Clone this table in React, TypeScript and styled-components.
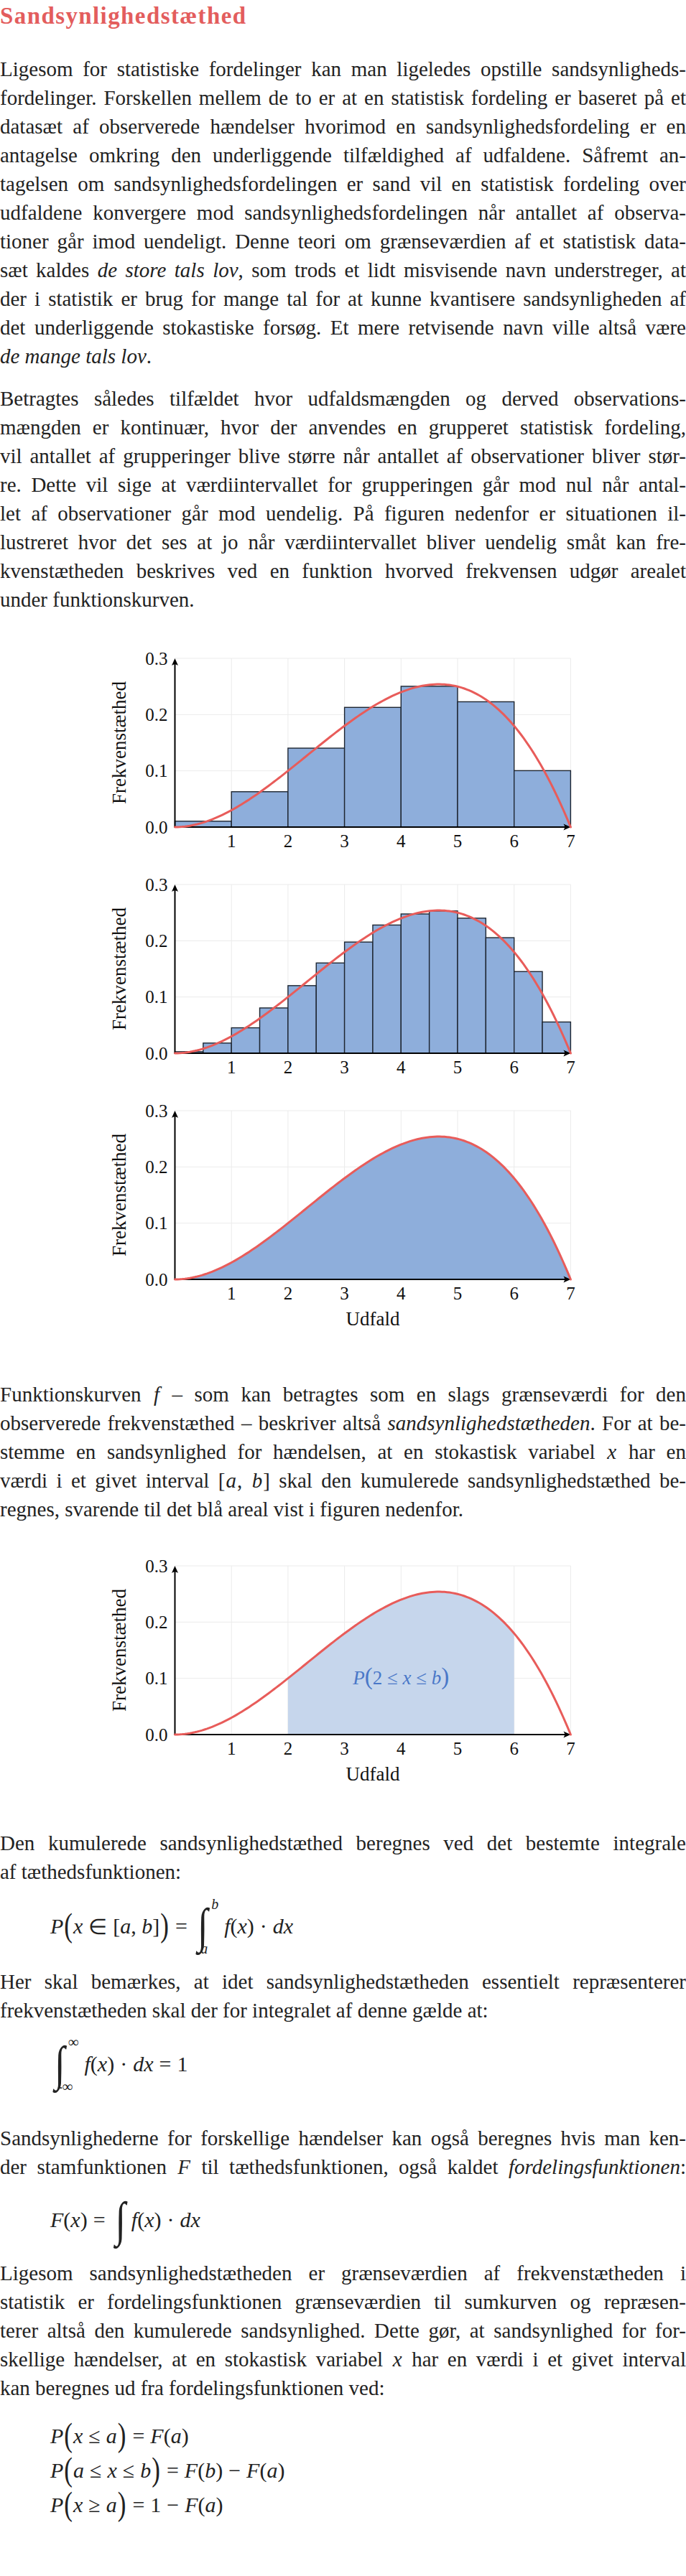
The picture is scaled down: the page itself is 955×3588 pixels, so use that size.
import React from "react";
import styled, { createGlobalStyle } from "styled-components";

const COLOR = {
  TEXT: "#222222",
  HEADING: "#e35d5d",
  CURVE: "#e85c5a",
  BAR: "#8eaedb",
  BAR_EDGE: "#1e2631",
  SHADE: "#c6d6ec",
  LABEL: "#4a78c8",
  GRID: "#ebebeb",
  AXIS: "#000000",
};

const SERIF = `"Liberation Serif", "Times New Roman", serif`;

const GlobalStyle = createGlobalStyle`
  html, body {
    margin: 0;
    padding: 0;
    background: #ffffff;
  }
  body {
    font-family: ${SERIF};
    color: ${COLOR.TEXT};
  }
`;

// ---------- chart geometry ----------
const UX = 78.7;
const UY = 783.3;
const OX = 105.5;
const OY = 255;
const FIG_W = 680;
const X = (x: number) => OX + x * UX;
const Y = (y: number) => OY - y * UY;
const NORM = 12 / 2401;
const density = (x: number) => x * x * (7 - x) * NORM;
const cumulative = (x: number) => ((7 * x ** 3) / 3 - x ** 4 / 4) * NORM;

const curvePoints = (from: number, to: number) => {
  const pts: string[] = [];
  const steps = 160;
  for (let i = 0; i <= steps; i++) {
    const x = from + ((to - from) * i) / steps;
    pts.push(`${X(x).toFixed(2)},${Y(density(x)).toFixed(2)}`);
  }
  return pts;
};

interface ChartProps {
  kind: "bars" | "area" | "shaded";
  step?: number;
  xLabel?: boolean;
  mt: number;
}

const Chart: React.FC<ChartProps> = ({ kind, step = 1, xLabel = false, mt }) => {
  const height = xLabel ? 330 : 290;
  const bars: { a: number; h: number }[] = [];
  if (kind === "bars") {
    for (let a = 0; a < 7 - 1e-9; a += step) {
      bars.push({ a, h: (cumulative(a + step) - cumulative(a)) / step });
    }
  }
  const curve = curvePoints(0, 7);

  return (
    <Figure $mt={mt} width={FIG_W} height={height} viewBox={`0 0 ${FIG_W} ${height}`}>
      {[1, 2, 3, 4, 5, 6, 7].map((i) => (
        <line key={`v${i}`} x1={X(i)} y1={Y(0)} x2={X(i)} y2={Y(0.3)} stroke={COLOR.GRID} strokeWidth={1} />
      ))}
      {[0.1, 0.2, 0.3].map((v) => (
        <line key={`h${v}`} x1={X(0)} y1={Y(v)} x2={X(7)} y2={Y(v)} stroke={COLOR.GRID} strokeWidth={1} />
      ))}

      {kind === "area" && (
        <path d={`M ${X(0)},${Y(0)} L ${curve.join(" L ")} Z`} fill={COLOR.BAR} />
      )}
      {kind === "shaded" && (
        <path
          d={`M ${X(2)},${Y(0)} L ${curvePoints(2, 6).join(" L ")} L ${X(6)},${Y(0)} Z`}
          fill={COLOR.SHADE}
        />
      )}
      {bars.map((b) => (
        <rect
          key={b.a}
          x={X(b.a)}
          y={Y(b.h)}
          width={step * UX}
          height={b.h * UY}
          fill={COLOR.BAR}
          stroke={COLOR.BAR_EDGE}
          strokeWidth={1.4}
        />
      ))}

      <line x1={X(0)} y1={Y(0)} x2={X(0)} y2={Y(0.3) + 5} stroke={COLOR.AXIS} strokeWidth={2} />
      <line x1={X(0) - 1} y1={Y(0)} x2={X(7) - 5} y2={Y(0)} stroke={COLOR.AXIS} strokeWidth={2} />
      <path
        d={`M ${X(0)} ${Y(0.3)} L ${X(0) + 4.5} ${Y(0.3) + 10} Q ${X(0)} ${Y(0.3) + 6.5} ${X(0) - 4.5} ${Y(0.3) + 10} Z`}
        fill={COLOR.AXIS}
      />
      <path
        d={`M ${X(7)} ${Y(0)} L ${X(7) - 10} ${Y(0) - 4.5} Q ${X(7) - 6.5} ${Y(0)} ${X(7) - 10} ${Y(0) + 4.5} Z`}
        fill={COLOR.AXIS}
      />

      <polyline points={curve.join(" ")} fill="none" stroke={COLOR.CURVE} strokeWidth={3} strokeLinecap="round" />

      {["0.0", "0.1", "0.2", "0.3"].map((t, i) => (
        <TickText key={t} x={OX - 10} y={Y(i / 10) + 8.5} textAnchor="end">
          {t}
        </TickText>
      ))}
      {[1, 2, 3, 4, 5, 6, 7].map((i) => (
        <TickText key={i} x={X(i)} y={OY + 28} textAnchor="middle">
          {i}
        </TickText>
      ))}
      <AxisText transform={`translate(37 ${OY - 117.5}) rotate(-90)`} textAnchor="middle">
        Frekvenstæthed
      </AxisText>
      {xLabel && (
        <AxisText x={X(3.5)} y={OY + 64} textAnchor="middle">
          Udfald
        </AxisText>
      )}
      {kind === "shaded" && (
        <AreaLabel x={X(4)} y={Y(0.1) + 8} textAnchor="middle">
          <tspan fontStyle="italic">P</tspan>
          <tspan fontSize={33}>(</tspan>
          <tspan>2 ≤ </tspan>
          <tspan fontStyle="italic">x</tspan>
          <tspan> ≤ </tspan>
          <tspan fontStyle="italic">b</tspan>
          <tspan fontSize={33}>)</tspan>
        </AreaLabel>
      )}
    </Figure>
  );
};

const Figure = styled.svg<{ $mt: number }>`
  display: block;
  margin: ${(p) => p.$mt}px auto 0;
  overflow: visible;
`;

const TickText = styled.text`
  font-family: ${SERIF};
  font-size: 25px;
  fill: #111111;
`;

const AxisText = styled.text`
  font-family: ${SERIF};
  font-size: 27px;
  fill: #111111;
`;

const AreaLabel = styled.text`
  font-family: ${SERIF};
  font-size: 27px;
  fill: ${COLOR.LABEL};
`;

// ---------- text ----------
const Page = styled.main`
  width: 955px;
  margin: 0;
  padding: 0 0 60px;
`;

const Heading = styled.h1`
  margin: 0;
  font-family: ${SERIF};
  font-size: 33px;
  line-height: 44px;
  font-weight: 700;
  letter-spacing: 1.4px;
  color: ${COLOR.HEADING};
`;

const Paragraph = styled.div<{ $mt: number }>`
  margin-top: ${(p) => p.$mt}px;
  font-size: 29px;
  line-height: 40px;
`;

const Line = styled.span<{ $last?: boolean }>`
  display: block;
  text-align: justify;
  text-align-last: ${(p) => (p.$last ? "left" : "justify")};
  word-spacing: ${(p) => (p.$last ? "0" : "-3px")};
`;

const Em = styled.em`
  font-style: italic;
`;

const Var = styled.i`
  font-style: italic;
  padding: 0 1px;
`;

// ---------- math ----------
const Display = styled.div<{ $mt: number; $h: number }>`
  margin-top: ${(p) => p.$mt}px;
  height: ${(p) => p.$h}px;
  display: flex;
  align-items: center;
  padding-left: 70px;
  font-size: 30px;
  white-space: nowrap;
`;

const EqList = styled.div<{ $mt: number }>`
  margin-top: ${(p) => p.$mt}px;
  display: flex;
  flex-direction: column;
  padding-left: 70px;
  font-size: 30px;
`;

const EqRow = styled.div`
  height: 48px;
  display: flex;
  align-items: center;
  white-space: nowrap;
`;

const MI = styled.span`
  font-style: italic;
`;

const Op = styled.span<{ $gap?: number }>`
  margin: 0 ${(p) => p.$gap ?? 8}px;
`;

const Paren = styled.span`
  display: inline-block;
  font-size: 35px;
  transform: scaleY(1.3);
  margin: 0 1px;
`;

const IntWrap = styled.span`
  display: inline-flex;
  align-items: stretch;
  margin: 0 8px 0 6px;
`;

const IntSign = styled.span<{ $h: number }>`
  display: inline-block;
  font-size: 52px;
  line-height: ${(p) => p.$h}px;
  height: ${(p) => p.$h}px;
  transform: scaleY(1.3);
`;

const Limits = styled.span`
  display: inline-flex;
  flex-direction: column;
  justify-content: space-between;
  font-size: 20px;
  line-height: 20px;
  font-style: italic;
  margin-left: -2px;
`;

const Upper = styled.span`
  padding-left: 7px;
  margin-top: -8px;
`;

const Lower = styled.span`
  margin-left: -8px;
  margin-bottom: -8px;
`;

const App: React.FC = () => {
  return (
    <Page>
      <GlobalStyle />
      <Heading>Sandsynlighedstæthed</Heading>

      <Paragraph $mt={32}>
        <Line>Ligesom for statistiske fordelinger kan man ligeledes opstille sandsynligheds-</Line>
        <Line>fordelinger. Forskellen mellem de to er at en statistisk fordeling er baseret på et</Line>
        <Line>datasæt af observerede hændelser hvorimod en sandsynlighedsfordeling er en</Line>
        <Line>antagelse omkring den underliggende tilfældighed af udfaldene. Såfremt an-</Line>
        <Line>tagelsen om sandsynlighedsfordelingen er sand vil en statistisk fordeling over</Line>
        <Line>udfaldene konvergere mod sandsynlighedsfordelingen når antallet af observa-</Line>
        <Line>tioner går imod uendeligt. Denne teori om grænseværdien af et statistisk data-</Line>
        <Line>
          sæt kaldes <Em>de store tals lov</Em>, som trods et lidt misvisende navn understreger, at
        </Line>
        <Line>der i statistik er brug for mange tal for at kunne kvantisere sandsynligheden af</Line>
        <Line>det underliggende stokastiske forsøg. Et mere retvisende navn ville altså være</Line>
        <Line $last>
          <Em>de mange tals lov</Em>.
        </Line>
      </Paragraph>

      <Paragraph $mt={19}>
        <Line>Betragtes således tilfældet hvor udfaldsmængden og derved observations-</Line>
        <Line>mængden er kontinuær, hvor der anvendes en grupperet statistisk fordeling,</Line>
        <Line>vil antallet af grupperinger blive større når antallet af observationer bliver stør-</Line>
        <Line>re. Dette vil sige at værdiintervallet for grupperingen går mod nul når antal-</Line>
        <Line>let af observationer går mod uendelig. På figuren nedenfor er situationen il-</Line>
        <Line>lustreret hvor det ses at jo når værdiintervallet bliver uendelig småt kan fre-</Line>
        <Line>kvenstætheden beskrives ved en funktion hvorved frekvensen udgør arealet</Line>
        <Line $last>under funktionskurven.</Line>
      </Paragraph>

      <Chart kind="bars" step={1} mt={42} />
      <Chart kind="bars" step={0.5} mt={25} />
      <Chart kind="area" xLabel mt={25} />

      <Paragraph $mt={65}>
        <Line>
          Funktionskurven <Var>f</Var> – som kan betragtes som en slags grænseværdi for den
        </Line>
        <Line>
          observerede frekvenstæthed – beskriver altså <Em>sandsynlighedstætheden</Em>. For at be-
        </Line>
        <Line>
          stemme en sandsynlighed for hændelsen, at en stokastisk variabel <Var>x</Var> har en
        </Line>
        <Line>
          værdi i et givet interval [<Var>a</Var>, <Var>b</Var>] skal den kumulerede sandsynlighedstæthed be-
        </Line>
        <Line $last>regnes, svarende til det blå areal vist i figuren nedenfor.</Line>
      </Paragraph>

      <Chart kind="shaded" xLabel mt={39} />

      <Paragraph $mt={56}>
        <Line>Den kumulerede sandsynlighedstæthed beregnes ved det bestemte integrale</Line>
        <Line $last>af tæthedsfunktionen:</Line>
      </Paragraph>

      <Display $mt={16} $h={80}>
        <MI>P</MI>
        <Paren>(</Paren>
        <MI>x</MI>
        <Op>∈</Op>[<MI>a</MI>,&nbsp;<MI>b</MI>]
        <Paren>)</Paren>
        <Op>=</Op>
        <IntWrap>
          <IntSign $h={66}>∫</IntSign>
          <Limits>
            <Upper>b</Upper>
            <Lower>a</Lower>
          </Limits>
        </IntWrap>
        <MI>f</MI>(<MI>x</MI>)<Op>·</Op>
        <MI>dx</MI>
      </Display>

      <Paragraph $mt={17}>
        <Line>Her skal bemærkes, at idet sandsynlighedstætheden essentielt repræsenterer</Line>
        <Line $last>frekvenstætheden skal der for integralet af denne gælde at:</Line>
      </Paragraph>

      <Display $mt={15} $h={80}>
        <IntWrap>
          <IntSign $h={66}>∫</IntSign>
          <Limits>
            <Upper>∞</Upper>
            <Lower>-∞</Lower>
          </Limits>
        </IntWrap>
        <MI>f</MI>(<MI>x</MI>)<Op>·</Op>
        <MI>dx</MI>
        <Op>=</Op>1
      </Display>

      <Paragraph $mt={43}>
        <Line>Sandsynlighederne for forskellige hændelser kan også beregnes hvis man ken-</Line>
        <Line>
          der stamfunktionen <Var>F</Var> til tæthedsfunktionen, også kaldet <Em>fordelingsfunktionen</Em>:
        </Line>
      </Paragraph>

      <Display $mt={14} $h={80}>
        <MI>F</MI>(<MI>x</MI>)<Op>=</Op>
        <IntWrap>
          <IntSign $h={60}>∫</IntSign>
        </IntWrap>
        <MI>f</MI>(<MI>x</MI>)<Op>·</Op>
        <MI>dx</MI>
      </Display>

      <Paragraph $mt={14}>
        <Line>Ligesom sandsynlighedstætheden er grænseværdien af frekvenstætheden i</Line>
        <Line>statistik er fordelingsfunktionen grænseværdien til sumkurven og repræsen-</Line>
        <Line>terer altså den kumulerede sandsynlighed. Dette gør, at sandsynlighed for for-</Line>
        <Line>
          skellige hændelser, at en stokastisk variabel <Var>x</Var> har en værdi i et givet interval
        </Line>
        <Line $last>kan beregnes ud fra fordelingsfunktionen ved:</Line>
      </Paragraph>

      <EqList $mt={23}>
        <EqRow>
          <MI>P</MI>
          <Paren>(</Paren>
          <MI>x</MI>
          <Op>≤</Op>
          <MI>a</MI>
          <Paren>)</Paren>
          <Op>=</Op>
          <MI>F</MI>(<MI>a</MI>)
        </EqRow>
        <EqRow>
          <MI>P</MI>
          <Paren>(</Paren>
          <MI>a</MI>
          <Op>≤</Op>
          <MI>x</MI>
          <Op>≤</Op>
          <MI>b</MI>
          <Paren>)</Paren>
          <Op>=</Op>
          <MI>F</MI>(<MI>b</MI>)<Op>−</Op>
          <MI>F</MI>(<MI>a</MI>)
        </EqRow>
        <EqRow>
          <MI>P</MI>
          <Paren>(</Paren>
          <MI>x</MI>
          <Op>≥</Op>
          <MI>a</MI>
          <Paren>)</Paren>
          <Op>=</Op>1<Op>−</Op>
          <MI>F</MI>(<MI>a</MI>)
        </EqRow>
      </EqList>
    </Page>
  );
};

export default App;
